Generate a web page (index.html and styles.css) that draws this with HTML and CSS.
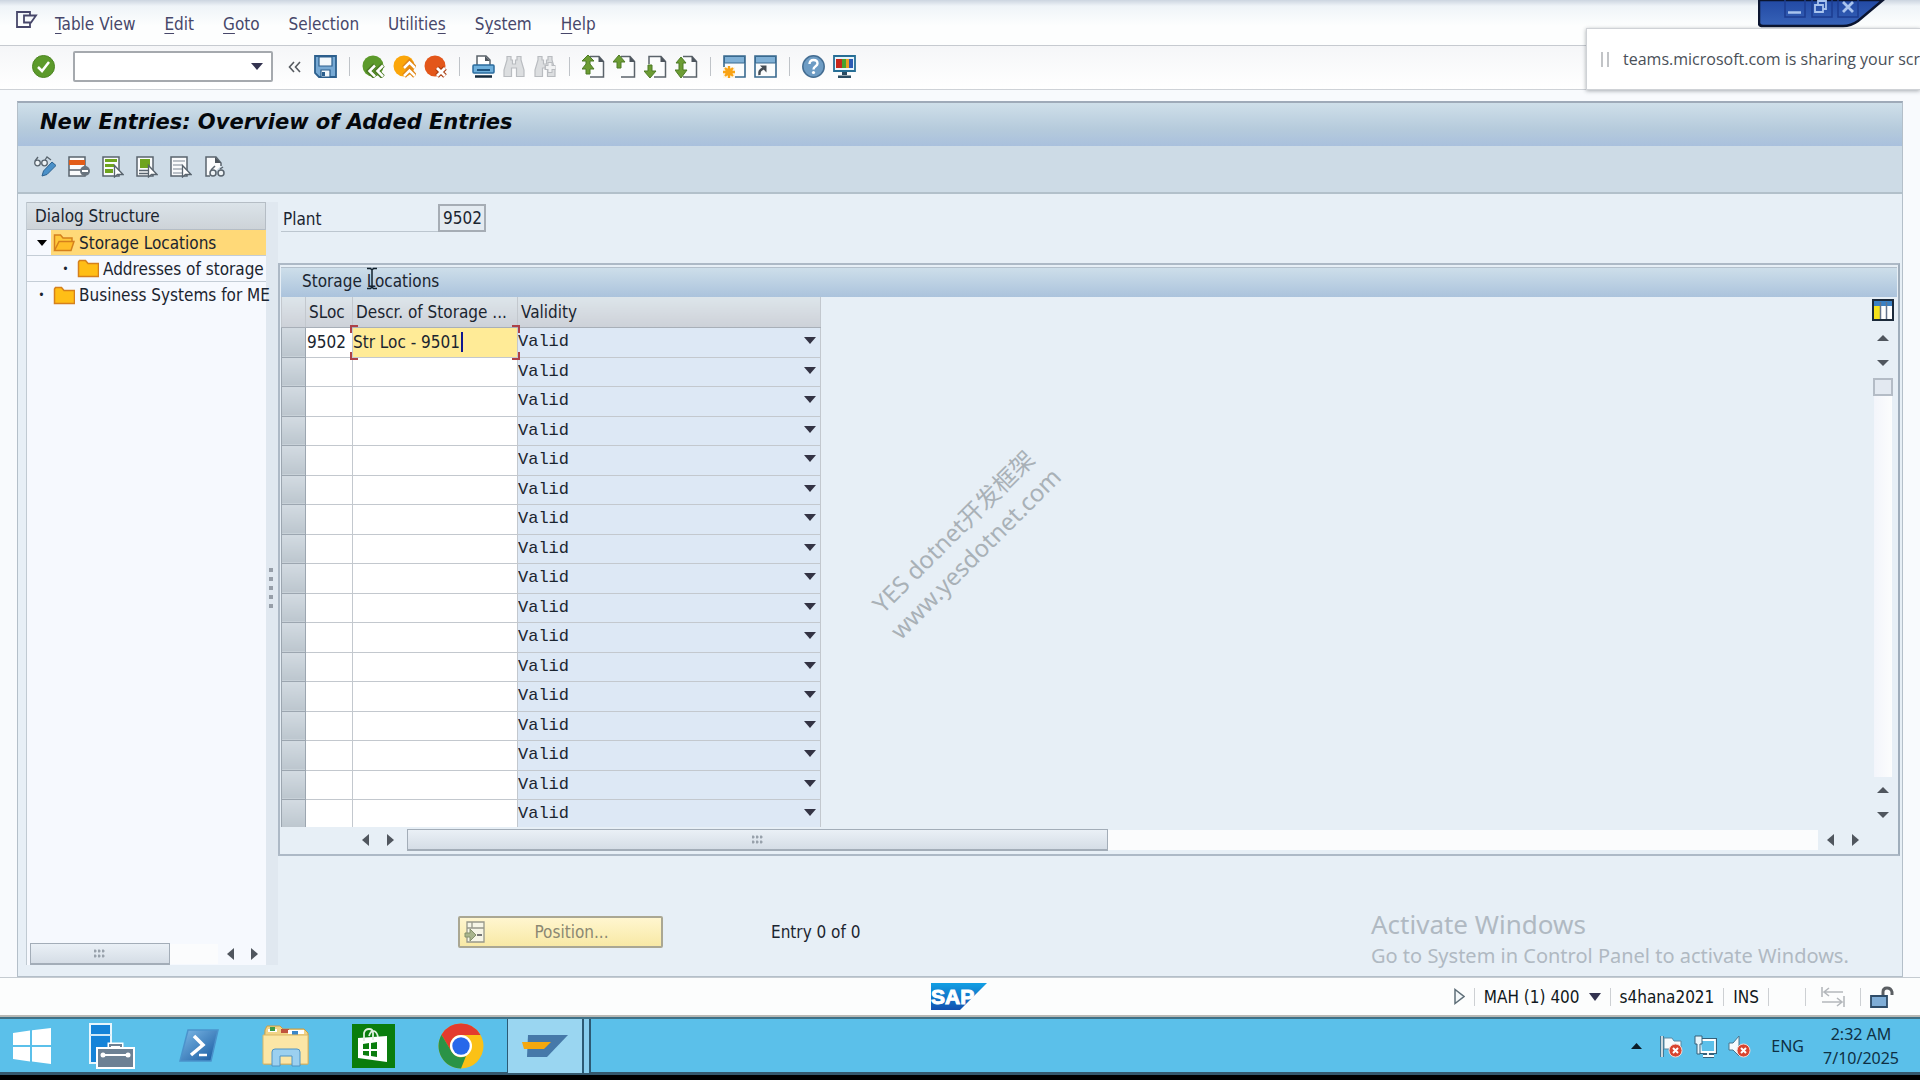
FILE: index.html
```html
<!DOCTYPE html>
<html lang="en">
<head>
<meta charset="utf-8">
<title>New Entries: Overview of Added Entries</title>
<link rel="stylesheet" href="styles.css">
</head>
<body>
<svg width="0" height="0" class="defs" aria-hidden="true">
  <defs>
    <linearGradient id="sapg" x1="0" y1="0" x2="0" y2="1"><stop offset="0" stop-color="#12a0e4"/><stop offset="1" stop-color="#1250b0"/></linearGradient>
    <linearGradient id="psg" x1="0" y1="0" x2="1" y2="1"><stop offset="0" stop-color="#7fbbe8"/><stop offset="1" stop-color="#15589f"/></linearGradient>
    <linearGradient id="rdg" x1="0" y1="0" x2="0" y2="1"><stop offset="0" stop-color="#2249a4"/><stop offset="1" stop-color="#3763b8"/></linearGradient>
    <g id="page"><path d="M8 1.500h9l4.500 5v15.500H8" fill="#fbfcfd" stroke="#5b636b" stroke-width="1.500"/><path d="M16.500 1v6h5.500z" fill="#4d555d"/></g>
    <g id="cursor"><path d="M12.500 9.500v11.500l3-2.500 1 0h4.500z" fill="#fff" stroke="#59646e" stroke-width="1.300"/></g>
    <g id="bino"><path d="M4 1.500h4v3.500h1.500v4h3v-4H14V1.500h4V5l3 10v6.500h-7.500V13h-5v8.500H1V15L4 5z" fill="#dcdee0" stroke="#b9bcc0" stroke-width="1.200"/></g>
    <g id="redx"><circle cx="15.500" cy="15.500" r="6.500" fill="#d8442f" stroke="#f3d8d4"/><path d="M13 13l5 5M18 13l-5 5" stroke="#fff" stroke-width="2"/></g>
    <g id="folder"><path d="M1.500 17.500V3l1-1.500h6L11 4.500h10.500v13z" fill="#ffbe16" stroke="#d5801c" stroke-width="1.500"/></g>
  </defs>
</svg>

<div class="app">
  <nav class="menubar">
    <svg class="sysicon" width="22" height="17" viewBox="0 0 22 17"><path d="M14 12v4H1V1h13v3M20 4.500H8v7h7z" fill="none" stroke="#47476a" stroke-width="1.800"/></svg>
    <a href="#"><u>T</u>able View</a><a href="#"><u>E</u>dit</a><a href="#"><u>G</u>oto</a><a href="#">Se<u>l</u>ection</a><a href="#">Utilitie<u>s</u></a><a href="#">S<u>y</u>stem</a><a href="#"><u>H</u>elp</a>
  </nav>

  <div class="toolbar">
    <button class="ic" aria-label="Enter"><svg viewBox="0 0 23 23"><circle cx="11.500" cy="11.500" r="11" fill="#5c9a2b" stroke="#4c8522"/><path d="M6 12l4 4 7-9" fill="none" stroke="#fff" stroke-width="2.500"/></svg></button>
    <div class="command"><input type="text" aria-label="Command field"><button aria-label="Command history"><svg width="12" height="7" viewBox="0 0 12 7"><path d="M0 0h12L6 7z" fill="#333350"/></svg></button></div>
    <button class="chev" aria-label="Collapse"><svg width="13" height="12" viewBox="0 0 13 12"><path d="M6 1L1.500 6 6 11M12 1L7.500 6l4.500 5" fill="none" stroke="#565a60" stroke-width="1.600"/></svg></button>
    <button class="ic" aria-label="Save"><svg viewBox="0 0 23 23"><path d="M1 1h21v21H5l-4-4z" fill="#77a9d4" stroke="#2c5f8d" stroke-width="1.800"/><path d="M5 2h13v9H5zM7 15h9v7H7z" fill="#f3f8fc" stroke="#2c5f8d" stroke-width="1.200"/><path d="M8 17h3v4H8z" fill="#2c5f8d"/></svg></button>
    <i class="sep"></i>
    <button class="ic" aria-label="Back"><svg viewBox="0 0 23 23"><circle cx="11" cy="11" r="10.500" fill="#5c9a2b"/><path d="M13 10l-6 6 6 6M21 10l-6 6 6 6" fill="none" stroke="#4c7a25" stroke-width="5"/><path d="M13 10.500L7.500 16l5.500 5.500M21 10.500L15.500 16l5.500 5.500" fill="none" stroke="#fff" stroke-width="2.500"/></svg></button>
    <button class="ic" aria-label="Exit"><svg viewBox="0 0 23 23"><circle cx="11" cy="11" r="10.500" fill="#fba60a"/><path d="M11 13l5.500-6 5.500 6M11 21l5.500-6 5.500 6" fill="none" stroke="#e08514" stroke-width="5"/><path d="M11 13l5.500-5.500L22 13M11 21l5.500-5.500L22 21" fill="none" stroke="#fff" stroke-width="2.500"/></svg></button>
    <button class="ic" aria-label="Cancel"><svg viewBox="0 0 23 23"><circle cx="11" cy="11" r="10.500" fill="#e3561a"/><path d="M13 13l8 8M21 13l-8 8" stroke="#a93a0c" stroke-width="5"/><path d="M13 13l8 8M21 13l-8 8" stroke="#fff" stroke-width="2.800"/></svg></button>
    <i class="sep"></i>
    <button class="ic" aria-label="Print"><svg viewBox="0 0 23 23"><path d="M5 11V1h9l4 4v6" fill="#fff" stroke="#5b636b" stroke-width="1.500"/><path d="M13 1v5h5z" fill="#4d555d"/><rect x="1" y="10" width="21" height="8" rx="1" fill="#6fb0dc" stroke="#2b6b9d" stroke-width="1.500"/><path d="M5 15h13" stroke="#1e5582" stroke-width="2"/><path d="M3 21.500h17" stroke="#152a3c" stroke-width="2.500"/></svg></button>
    <button class="ic" aria-label="Find"><svg viewBox="0 0 23 23"><use href="#bino"/></svg></button>
    <button class="ic" aria-label="Find next"><svg viewBox="0 0 23 23"><use href="#bino"/><path d="M16 7v11M10.500 12.500h11" stroke="#b9bcc0" stroke-width="5"/><path d="M16 8v9M12 12.500h9" stroke="#f1f2f3" stroke-width="3"/></svg></button>
    <i class="sep"></i>
    <button class="ic" aria-label="First page"><svg viewBox="0 0 23 23"><use href="#page"/><path d="M6 0l6 6H8v3l4 5H8v5H4v-5H0l4-5V6H0z" fill="#6c9c33" stroke="#4d7a26"/></svg></button>
    <button class="ic" aria-label="Previous page"><svg viewBox="0 0 23 23"><use href="#page"/><path d="M6 0l6 7H8v6H4V7H0z" fill="#6c9c33" stroke="#4d7a26"/></svg></button>
    <button class="ic" aria-label="Next page"><svg viewBox="0 0 23 23"><path d="M5 9V1.500h12l4.500 5v15.500H10" fill="#fbfcfd" stroke="#5b636b" stroke-width="1.500"/><path d="M16.500 1v6h5.500z" fill="#4d555d"/><path d="M6 23l6-7H8v-6H4v6H0z" fill="#6c9c33" stroke="#4d7a26"/></svg></button>
    <button class="ic" aria-label="Last page"><svg viewBox="0 0 23 23"><use href="#page"/><path d="M6 2l5 6H8v7h4l-6 8-6-8h4V8H1z" fill="#6c9c33" stroke="#4d7a26"/></svg></button>
    <i class="sep"></i>
    <button class="ic" aria-label="New session"><svg viewBox="0 0 23 23"><path d="M1 1h21v21H1z" fill="#fafcfd" stroke="#39698f" stroke-width="1.600"/><path d="M1.500 1.500h20V8h-20z" fill="#7fb0d6" stroke="#39698f"/><path d="M0 12h12v11H0z" fill="#fdf5e4"/><path d="M6 11v12M0 17h12M2 13l8 8M10 13l-8 8" stroke="#f9a314" stroke-width="2.300"/><circle cx="6" cy="17" r="3.800" fill="#f9a314"/></svg></button>
    <button class="ic" aria-label="Create shortcut"><svg viewBox="0 0 23 23"><path d="M1 1h21v21H1z" fill="#fafcfd" stroke="#39698f" stroke-width="1.600"/><path d="M1.500 1.500h20V8h-20z" fill="#7fb0d6" stroke="#39698f"/><path d="M5.500 20q-1-5 4-6.500" fill="none" stroke="#444c54" stroke-width="2.500"/><path d="M6 10.500h6.500v7z" fill="#444c54"/></svg></button>
    <i class="sep"></i>
    <button class="ic" aria-label="Help"><svg viewBox="0 0 23 23"><circle cx="11.500" cy="11.500" r="10.700" fill="#6e9cc4" stroke="#446d92" stroke-width="1.500"/><path d="M7.500 9q0-4 4-4t4 3.500c0 3-4 2.500-4 6" fill="none" stroke="#fff" stroke-width="2.400"/><circle cx="11.500" cy="17.500" r="1.600" fill="#fff"/></svg></button>
    <button class="ic" aria-label="Customize layout"><svg viewBox="0 0 23 23"><path d="M1 1h21v15H1z" fill="#e8f6fc" stroke="#266e96" stroke-width="1.800"/><path d="M3 4h6v9H3z" fill="#c6261c"/><path d="M9 4h4v9H9z" fill="#47a12d"/><path d="M13 4h3v9h-3z" fill="#e8a020"/><path d="M16 4h4v9h-4z" fill="#2d5bb4"/><path d="M9 17h5v3H9zM5 20.500h13V23H5z" fill="#2b4c63"/></svg></button>
  </div>

  <main class="frame">
    <h1>New Entries: Overview of Added Entries</h1>
    <div class="subbar">
      <button aria-label="Display/Change"><svg viewBox="0 0 22 22"><circle cx="3.500" cy="7" r="2.800" fill="#eef3f6" stroke="#59646e" stroke-width="1.300"/><circle cx="10.500" cy="7" r="2.800" fill="#eef3f6" stroke="#59646e" stroke-width="1.300"/><path d="M1 5l3-4M11 4l2-3 4 3" fill="none" stroke="#59646e" stroke-width="1.300"/><path d="M8 20l1.500-5L18 6l4 3.500-9 9z" fill="#4a90c8" stroke="#2c618f"/></svg></button>
      <button aria-label="Delete"><svg viewBox="0 0 22 22"><path d="M1 1h16v19H1zM1 14h16" fill="#fafbfc" stroke="#59646e" stroke-width="1.500"/><path d="M1 4h16v5H1z" fill="#e25c18"/><circle cx="17" cy="15" r="5" fill="#69747e"/><path d="M14 15h6" stroke="#fff" stroke-width="2"/></svg></button>
      <button aria-label="Select all"><svg viewBox="0 0 22 22"><path d="M1 1h16v19H1z" fill="#fafbfc" stroke="#59646e" stroke-width="1.500"/><path d="M3 3h12v3H3zM3 8h9v3H3zM3 13h8v4H3z" fill="#6fa41e"/><use href="#cursor"/></svg></button>
      <button aria-label="Select block"><svg viewBox="0 0 22 22"><path d="M1 1h16v19H1zM3 14.500h9M3 17.500h9" fill="#fafbfc" stroke="#59646e" stroke-width="1.500"/><path d="M4 3h10v9H4z" fill="#6fa41e"/><use href="#cursor"/></svg></button>
      <button aria-label="Deselect all"><svg viewBox="0 0 22 22"><path d="M1 1h16v19H1z" fill="#fafbfc" stroke="#59646e" stroke-width="1.500"/><path d="M3 5h12M3 9h9M3 13h9M3 17h9" stroke="#a6afb6" stroke-width="1.500"/><use href="#cursor"/></svg></button>
      <button aria-label="Print preview"><svg viewBox="0 0 22 22"><path d="M6 20H2V1h10l5 6v3" fill="#fafbfc" stroke="#59646e" stroke-width="1.500"/><path d="M11 1v6h6z" fill="#4d555d"/><circle cx="9" cy="17" r="3" fill="#eef3f6" stroke="#59646e" stroke-width="1.500"/><circle cx="17" cy="17" r="3" fill="#eef3f6" stroke="#59646e" stroke-width="1.500"/><path d="M7 14l4-4M16 13l3-2" fill="none" stroke="#59646e" stroke-width="1.500"/></svg></button>
    </div>

    <div class="body">
      <aside class="tree">
        <h2>Dialog Structure</h2>
        <ul>
          <li><span class="tw"><svg width="10" height="6" viewBox="0 0 10 6"><path d="M0 0h10L5 6z"/></svg></span><a class="sel" href="#"><svg width="22" height="19" viewBox="0 0 22 19"><path d="M1.500 17V2h6L10 5h9v3" fill="#ffc83a" stroke="#d5801c" stroke-width="1.500"/><path d="M1.500 17.500L6 8.500h15l-3 9z" fill="#ffbe28" stroke="#d5801c" stroke-width="1.500"/></svg>Storage Locations</a></li>
          <li class="child"><span class="tw">•</span><a href="#"><svg width="22" height="19" viewBox="0 0 22 19"><use href="#folder"/></svg>Addresses of storage</a></li>
          <li class="last"><span class="tw">•</span><a href="#"><svg width="22" height="19" viewBox="0 0 22 19"><use href="#folder"/></svg>Business Systems for ME</a></li>
        </ul>
        <div class="hbar">
          <div class="thumb short"><i class="grip"></i></div><div class="track"></div>
          <button class="arr l" aria-label="Scroll left"></button><button class="arr r" aria-label="Scroll right"></button>
        </div>
      </aside>

      <div class="splitter"><i></i><i></i><i></i><i></i><i></i></div>

      <section class="content">
        <div class="plant"><label for="plant">Plant</label><input id="plant" value="9502" readonly></div>

        <section class="group">
          <h3>Storage Locations</h3>
          <div class="gridwrap">
            <table>
              <colgroup><col class="c0"><col class="c1"><col class="c2"><col class="c3"></colgroup>
              <thead><tr><th></th><th>SLoc</th><th>Descr. of Storage ...</th><th>Validity</th></tr></thead>
              <tbody>
                <tr><th></th><td><input aria-label="SLoc" value="9502"></td><td class="active"><span class="corners"></span><span class="typed"><span role="textbox" aria-label="Description">Str Loc - 9501</span><i class="caret"></i></span></td><td class="v"><select aria-label="Validity"><option>Valid</option></select></td></tr>
                <tr><th></th><td><input aria-label="SLoc"></td><td><input aria-label="Description"></td><td class="v"><select aria-label="Validity"><option>Valid</option></select></td></tr>
                <tr><th></th><td><input aria-label="SLoc"></td><td><input aria-label="Description"></td><td class="v"><select aria-label="Validity"><option>Valid</option></select></td></tr>
                <tr><th></th><td><input aria-label="SLoc"></td><td><input aria-label="Description"></td><td class="v"><select aria-label="Validity"><option>Valid</option></select></td></tr>
                <tr><th></th><td><input aria-label="SLoc"></td><td><input aria-label="Description"></td><td class="v"><select aria-label="Validity"><option>Valid</option></select></td></tr>
                <tr><th></th><td><input aria-label="SLoc"></td><td><input aria-label="Description"></td><td class="v"><select aria-label="Validity"><option>Valid</option></select></td></tr>
                <tr><th></th><td><input aria-label="SLoc"></td><td><input aria-label="Description"></td><td class="v"><select aria-label="Validity"><option>Valid</option></select></td></tr>
                <tr><th></th><td><input aria-label="SLoc"></td><td><input aria-label="Description"></td><td class="v"><select aria-label="Validity"><option>Valid</option></select></td></tr>
                <tr><th></th><td><input aria-label="SLoc"></td><td><input aria-label="Description"></td><td class="v"><select aria-label="Validity"><option>Valid</option></select></td></tr>
                <tr><th></th><td><input aria-label="SLoc"></td><td><input aria-label="Description"></td><td class="v"><select aria-label="Validity"><option>Valid</option></select></td></tr>
                <tr><th></th><td><input aria-label="SLoc"></td><td><input aria-label="Description"></td><td class="v"><select aria-label="Validity"><option>Valid</option></select></td></tr>
                <tr><th></th><td><input aria-label="SLoc"></td><td><input aria-label="Description"></td><td class="v"><select aria-label="Validity"><option>Valid</option></select></td></tr>
                <tr><th></th><td><input aria-label="SLoc"></td><td><input aria-label="Description"></td><td class="v"><select aria-label="Validity"><option>Valid</option></select></td></tr>
                <tr><th></th><td><input aria-label="SLoc"></td><td><input aria-label="Description"></td><td class="v"><select aria-label="Validity"><option>Valid</option></select></td></tr>
                <tr><th></th><td><input aria-label="SLoc"></td><td><input aria-label="Description"></td><td class="v"><select aria-label="Validity"><option>Valid</option></select></td></tr>
                <tr><th></th><td><input aria-label="SLoc"></td><td><input aria-label="Description"></td><td class="v"><select aria-label="Validity"><option>Valid</option></select></td></tr>
                <tr><th></th><td><input aria-label="SLoc"></td><td><input aria-label="Description"></td><td class="v"><select aria-label="Validity"><option>Valid</option></select></td></tr>
              </tbody>
            </table>
            <div class="vbar">
              <button class="config" aria-label="Table settings"><svg width="22" height="22" viewBox="0 0 22 22"><path d="M1 1h20v20H1z" fill="#fff" stroke="#1c2a3a" stroke-width="2"/><path d="M2 2h18v5H2z" fill="#3a80c4"/><path d="M2 7h6v13H2z" fill="#f6e21c"/><path d="M8.500 3v17M14.500 3v17" stroke="#64748c" stroke-width="1.500"/></svg></button>
              <button class="arr u" aria-label="Scroll up"></button><button class="arr d" aria-label="Scroll down"></button>
              <div class="vthumb"></div><div class="vtrack"></div>
              <button class="arr u" aria-label="Page up"></button><button class="arr d" aria-label="Page down"></button>
            </div>
          </div>
          <div class="hbar wide">
            <button class="arr l" aria-label="Scroll left"></button><button class="arr r" aria-label="Scroll right"></button>
            <div class="thumb long"><i class="grip"></i></div><div class="track"></div>
            <button class="arr l" aria-label="Scroll left"></button><button class="arr r" aria-label="Scroll right"></button>
          </div>
        </section>

        <div class="foot">
          <button class="position"><svg width="22" height="22" viewBox="0 0 22 22"><path d="M3 1h17v20H3zM3 7h17M8 1v6" fill="#f6f5e6" stroke="#96978a" stroke-width="1.300"/><path d="M1 12h5V8l6 6-6 6v-4H1z" fill="#a9b58c" stroke="#84906c"/><path d="M13 14h5" stroke="#777" stroke-width="2"/></svg><span>Position...</span></button>
          <span>Entry 0 of 0</span>
        </div>
      </section>
    </div>
  </main>

  <footer class="status">
    <svg class="sap" width="56" height="27" viewBox="0 0 56 27"><path d="M0 0h56L29 27H0z" fill="url(#sapg)"/><text x="0" y="21" class="saptext">SAP</text></svg>
    <div class="info">
      <svg class="tri" width="11" height="18" viewBox="0 0 11 18"><path d="M1 1.500v14l9-7z" fill="#f4f8fa" stroke="#5f6f79" stroke-width="1.500"/></svg>
      <i></i><span class="cell">MAH (1) 400 <svg width="12" height="8" viewBox="0 0 12 8"><path d="M0 0h12L6 8z" fill="#333350"/></svg></span>
      <i></i><span class="cell">s4hana2021</span><i></i><span class="cell">INS</span><i></i><span class="blank"></span><i></i>
      <svg class="swap" width="24" height="22" viewBox="0 0 24 22"><path d="M1 1v10M23 10v11M3 6h19M8 2L3 6l5 4M1 16h20M16 12l5 4-5 4" fill="none" stroke="#b4b8bc" stroke-width="1.600"/></svg>
      <i></i>
      <svg class="lock" width="24" height="22" viewBox="0 0 24 22"><path d="M13 10V6q0-4 4-4t5 4v3" fill="none" stroke="#5a5e62" stroke-width="3"/><path d="M1 10h16v11H1z" fill="#7fadd6" stroke="#2e4c68" stroke-width="1.800"/></svg>
    </div>
  </footer>
</div>

<div class="taskbar">
  <div class="tasks">
    <button class="t1" aria-label="Start"><svg width="38" height="36" viewBox="0 0 38 36"><path d="M0 5l17-2.500V17H0zM19 2.200L38 0v17H19zM0 19h17v14.500L0 31zM19 19h19v17l-19-2.500z" fill="#fff"/></svg></button>
    <button class="t2" aria-label="Server Manager"><svg width="46" height="46" viewBox="0 0 46 46"><path d="M1 1h21v39H1z" fill="#1583d8" stroke="#e8f6fd" stroke-width="2"/><path d="M1 12h21" stroke="#d0e9f8" stroke-width="2"/><path d="M21 25v-3h11v3" fill="none" stroke="#fff" stroke-width="5"/><path d="M8 25h37v20H8z" fill="#6d8194" stroke="#fff" stroke-width="2"/><path d="M21 24v-2h11v2" fill="none" stroke="#6d8194" stroke-width="2"/><path d="M12 32h29" stroke="#fff" stroke-width="2"/><circle cx="14" cy="32" r="2.500" fill="#fff"/><circle cx="39" cy="32" r="2.500" fill="#fff"/></svg></button>
    <button class="t3" aria-label="PowerShell"><svg width="40" height="34" viewBox="0 0 40 34"><path d="M9 1h30l-7 31H1z" fill="url(#psg)" stroke="#4b93cc" stroke-width="1.500"/><path d="M15 7l9 9-12 10" fill="none" stroke="#fff" stroke-width="3.500"/><path d="M20 26h8" stroke="#fff" stroke-width="2.500"/></svg></button>
    <button class="t4" aria-label="File Explorer"><svg width="48" height="42" viewBox="0 0 48 42"><path d="M3 5l2-4h13l3 3h21l4 4v31H2z" fill="#f2d486" stroke="#c99d47"/><path d="M6 4h9v3H6z" fill="#fff"/><path d="M8 2h5v4H8z" fill="#3a9a48"/><path d="M19 4h8v4h-8z" fill="#c0523c"/><path d="M26 5h16v4H26z" fill="#fff"/><path d="M30 6h6v4h-6z" fill="#3a86c8"/><path d="M1 10h45v29H1z" fill="#fbe6a6" stroke="#dcb765"/><path d="M10 41V27q0-3 3-3h22q3 0 3 3v14h-8V31H18v10z" fill="#9bd0f0" stroke="#4f94c4"/></svg></button>
    <button class="t5" aria-label="Store"><svg width="43" height="44" viewBox="0 0 43 44"><path d="M0 0h43v44H0z" fill="#0a7d0d"/><path d="M6 14l29-2v26L6 34z" fill="#fff"/><path d="M12 17V9q1-4 5-4t4 4v7M17 12q2-6 5-5t4 6" fill="none" stroke="#dff0df" stroke-width="1.800"/><path d="M11 20l6-1v6h-6zM19 19l6-1v7h-6zM11 27h6v5l-6-1zM19 27h6v6l-6-1z" fill="#0a7d0d"/></svg></button>
    <button class="t6" aria-label="Chrome"><svg width="46" height="46" viewBox="0 0 46 46"><circle cx="23" cy="23" r="22.500" fill="#fbc116"/><path d="M3.500 11.800A22.500 22.500 0 0 1 42.500 12H23a11 11 0 0 0-10 16z" fill="#e33b2e"/><path d="M3.500 11.800L13.500 28.500a11 11 0 0 0 14.500 4.500L23 45.500A22.500 22.500 0 0 1 3.500 11.800z" fill="#2a9347"/><circle cx="23" cy="23" r="11" fill="#fff"/><circle cx="23" cy="23" r="8.700" fill="#2768ea"/></svg></button>
    <button class="t7" aria-label="SAP Logon"><svg width="46" height="22" viewBox="0 0 46 22"><path d="M6 0h40L25 22H5z" fill="#4679a9"/><path d="M0 7h29l-7 7H2z" fill="#f5a80f"/></svg></button>
    <span class="stack"></span>
  </div>
  <div class="tray">
    <svg class="up" width="11" height="6" viewBox="0 0 11 6"><path d="M0 6h11L5.500 0z" fill="#0a1c28"/></svg>
    <svg width="23" height="23" viewBox="0 0 23 23"><path d="M2 1v21" stroke="#35607a" stroke-width="3.500"/><path d="M2 1v21" stroke="#fff" stroke-width="1.500"/><path d="M4 3h8l2 3h7v8H4z" fill="#f6fbfd" stroke="#5a89a2"/><use href="#redx"/></svg>
    <svg width="23" height="23" viewBox="0 0 23 23"><path d="M6 5h15v12H7zM14 17v4M9 21h11" fill="none" stroke="#35607a" stroke-width="4"/><path d="M6 5h15v12H7zM14 17v4M9 21h11" fill="#5cc0ea" stroke="#fff" stroke-width="1.800"/><path d="M1 1h7v8H6v10H3V9H1z" fill="#e8f5fb" stroke="#35607a"/></svg>
    <svg width="23" height="23" viewBox="0 0 23 23"><path d="M1 8h4l6-7v20l-6-6H1z" fill="#f6fbfd" stroke="#48748c"/><use href="#redx"/></svg>
    <span class="lang">ENG</span>
    <div class="clock"><div>2:32 AM</div><div>7/10/2025</div></div>
  </div>
</div>

<div class="watermark"><div>YES dotnet开发框架</div><div>www.yesdotnet.com</div></div>
<div class="activate"><div>Activate Windows</div><p>Go to System in Control Panel to activate Windows.</p></div>
<svg class="ibeam" width="12" height="23" viewBox="0 0 12 23"><path d="M1 1.500h3.500L6 3l1.500-1.500H11M6 3v17M1 21.500h3.500L6 20l1.500 1.500H11" fill="none" stroke="#10202c" stroke-width="1.500"/></svg>
<svg class="rdp" width="136" height="28" viewBox="0 0 136 28"><path d="M1 0v23q0 3 4 3h80q8 0 15-5L125 0z" fill="url(#rdg)" stroke="#0b1530" stroke-width="2.500"/><path d="M27-1h20v18H27zM54-1h20v18H54zM80-1h20v18H80z" fill="none" stroke="#1d3c90" stroke-width="1.500"/><path d="M30 12.500h13" stroke="#a9c4ee" stroke-width="2.500"/><path d="M57 5h8v7h-8zM60 4V1h8v8h-3" fill="none" stroke="#a9c4ee" stroke-width="1.800"/><path d="M85 2l10 10M95 2L85 12" stroke="#a9c4ee" stroke-width="2.800"/></svg>
<div class="sharing"><i></i><i></i><span>teams.microsoft.com is sharing your screen.</span></div>
</body>
</html>
```
FILE: styles.css
```css
* { box-sizing: border-box; }
html, body { height: 100%; margin: 0; }
body {
  display: flex;
  flex-direction: column;
  overflow: hidden;
  position: relative;
  background: #000;
  color: #1b2530;
  font: 17px/24px "DejaVu Sans Condensed", "Noto Sans", "Noto Sans CJK SC", sans-serif;
}
.defs { position: absolute; }
svg { display: block; flex: none; }
h1, h2, h3, ul, p { margin: 0; padding: 0; font-weight: normal; }
a { color: inherit; text-decoration: none; }
button { border: 0; padding: 0; background: none; font: inherit; color: inherit; }
input, select { font: inherit; color: inherit; border: 0; padding: 0; margin: 0; background: none; border-radius: 0; outline: 0; min-width: 0; }

.app { flex: 1; min-height: 0; display: flex; flex-direction: column; background: #f8fafd; }

.menubar {
  height: 46px;
  display: flex;
  align-items: center;
  gap: 29px;
  padding: 3px 16px 0;
  background: linear-gradient(#ccd5e0, #eff4f8 6px, #fdfefe 26px);
  border-bottom: 1px solid #c6cad0;
  color: #47476a;
}
.menubar a { white-space: nowrap; }
.menubar u { text-underline-offset: 3px; }
.sysicon { margin: 0 -12px 9px 0; }

.toolbar {
  height: 44px;
  display: flex;
  align-items: center;
  gap: 8px;
  padding: 0 32px 2px;
  background: linear-gradient(#f5f6f8, #fff);
  border-bottom: 1px solid #ced2d7;
}
.ic, .ic svg { width: 23px; height: 23px; }
.command {
  width: 200px; height: 31px; margin-left: 10px;
  display: flex; align-items: center; padding-right: 8px;
  background: #fff; border: 2px solid #a5a9ae; border-radius: 2px;
}
.command input { flex: 1; }
.chev { margin: 0 5px 0 7px; }
.sep { width: 1px; height: 19px; margin: 0 4px; background: #bfc3c8; }

.frame {
  flex: 1; min-height: 0;
  margin: 11px 17px 0;
  display: flex; flex-direction: column;
  border: 1px solid #b4bfc9;
  border-top: 2px solid #9faab8;
  background: #e7eff6;
}
.frame h1 {
  height: 43px;
  padding: 0 22px;
  background: linear-gradient(#cfdfe9, #b6cbdc 60%, #a9c0dd);
  font: italic bold 21px/38px "DejaVu Sans", sans-serif;
  color: #05080c;
}
.subbar {
  height: 48px;
  display: flex; align-items: center; gap: 12px;
  padding: 0 16px 4px;
  background: #cddbe6;
  border-bottom: 2px solid #b2c0ca;
}
.subbar svg { width: 22px; height: 22px; }

.body { flex: 1; min-height: 0; display: grid; grid-template-columns: 240px 12px minmax(0, 1fr); padding: 8px 2px 0 8px; }

.tree { z-index: 1; min-height: 0; margin-bottom: 11px; display: flex; flex-direction: column; background: #f6f9fe; border-left: 1px solid #c0cad2; }
.tree h2 { height: 28px; padding-left: 8px; font-size: 17px; line-height: 27px; background: linear-gradient(#dbe3e9, #cdd3d8); border: 1px solid #b5bdc5; border-left: 0; }
.tree ul { flex: 1; list-style: none; }
.tree li { height: 26px; display: flex; align-items: center; border-bottom: 1px solid #c4cdd6; }
.tree li.last { border-bottom: 0; }
.tw { width: 24px; padding-left: 5px; flex: none; display: flex; justify-content: center; font-size: 12px; }
.child { padding-left: 24px; }
.tree a { flex: 1; min-width: 0; height: 25px; display: flex; align-items: center; gap: 4px; padding-left: 2px; white-space: nowrap; }
.tree a.sel { background: #ffd978; }

.hbar { height: 22px; display: flex; align-items: center; }
.thumb { height: 22px; display: grid; place-items: center; border: 1px solid #a3adb8; border-bottom-width: 2px; background: linear-gradient(#eaf0f6, #d5dde6); }
.thumb.short { width: 140px; margin-left: 3px; }
.thumb.long { width: 701px; margin-left: 4px; }
.grip { width: 12px; height: 10px; background: radial-gradient(circle at 1px 2px, #98a1ab 1px, transparent 2px) 0 0 / 4px 5px; }
.track { flex: 1; height: 20px; background: #fbfcfd; }
.arr { width: 25px; height: 22px; display: grid; place-items: center; flex: none; }
.arr::before { content: ""; border: 6px solid transparent; }
.arr.l::before { border-left: 0; border-right: 7px solid #50565e; }
.arr.r::before { border-right: 0; border-left: 7px solid #50565e; }
.arr.u::before { border-top: 0; border-bottom: 6px solid #50565e; }
.arr.d::before { border-bottom: 0; border-top: 6px solid #50565e; }
.tree .arr { width: 24px; }

.splitter { display: flex; flex-direction: column; align-items: center; justify-content: center; gap: 5px; background: #e0e8f0; padding: 8px 2px 0 0; margin-bottom: 11px; }
.splitter i { width: 4px; height: 4px; background: #969ea8; }

.content { min-width: 0; min-height: 0; display: flex; flex-direction: column; }
.plant { display: flex; height: 28px; margin: 2px 0 31px 3px; }
.plant label { width: 157px; padding: 0 2px; line-height: 30px; border-bottom: 1px solid #bcc6cf; }
.plant input { width: 48px; height: 28px; padding-left: 3px; border: 2px solid #a6adb5; background: #e4ebf1; }

.group { flex: 1; min-height: 0; display: flex; flex-direction: column; border: 2px solid #adb9c6; border-right-color: #9fadbb; padding: 2px 1px 3px; overflow: hidden; }
.group h3 { height: 30px; flex: none; padding-left: 21px; font-size: 17px; line-height: 26px; background: linear-gradient(#cddeea, #abc3dc); border-top: 1px solid #b3c0cc; }
.gridwrap { flex: 1; min-height: 0; display: flex; justify-content: space-between; overflow: hidden; }
table { border-collapse: collapse; table-layout: fixed; width: 539px; flex: none; align-self: flex-start; }
.c0 { width: 24px; } .c1 { width: 47px; } .c2 { width: 165px; } .c3 { width: 303px; }
thead tr { height: 30px; }
tbody tr { height: 29px; }
tbody tr:nth-child(odd) { height: 30px; }
th, td { padding: 0; height: inherit; border: 1px solid #c3c8ce; border-top: 0; text-align: left; font-weight: normal; white-space: nowrap; }
thead th { padding-left: 3px; background: linear-gradient(#dde5ea, #cdd1d8); border-bottom: 1px solid #a8afb8; }
tbody th { background: linear-gradient(#d3dbe2, #bcc6ce); border-color: #9ca6b0; }
td { background: #fff; }
td input { display: block; width: 100%; height: 28px; padding-left: 1px; }
td.v { background: #dde8f5; }
td select {
  display: block; width: 100%; height: 28px;
  appearance: none;
  font: 17px/28px "Liberation Mono", monospace;
  background: url("data:image/svg+xml,%3Csvg xmlns='http://www.w3.org/2000/svg' width='12' height='7'%3E%3Cpath d='M0 0h12L6 7z' fill='%23334'/%3E%3C/svg%3E") right 4px top 9px no-repeat;
}
td.active { position: relative; background: #ffeb97; }
.typed { display: flex; align-items: center; }
.caret { width: 2px; height: 20px; background: #101890; margin-left: 1px; }
.corners {
  position: absolute; inset: -3px; pointer-events: none; z-index: 2;
  --c: #ad4148;
  background:
    linear-gradient(var(--c) 0 0) 0 0 / 8px 2px, linear-gradient(var(--c) 0 0) 0 0 / 2px 8px,
    linear-gradient(var(--c) 0 0) 100% 0 / 8px 2px, linear-gradient(var(--c) 0 0) 100% 0 / 2px 8px,
    linear-gradient(var(--c) 0 0) 0 100% / 8px 2px, linear-gradient(var(--c) 0 0) 0 100% / 2px 8px,
    linear-gradient(var(--c) 0 0) 100% 100% / 8px 2px, linear-gradient(var(--c) 0 0) 100% 100% / 2px 8px;
  background-repeat: no-repeat;
}
.vbar { width: 28px; display: flex; flex-direction: column; align-items: center; }
.config { margin: 2px 0 4px; }
.vbar .arr { height: 25px; }
.vthumb { width: 20px; height: 18px; margin-top: 3px; border: 2px solid #b4bcc6; background: #e3e9f1; flex: none; }
.vtrack { flex: 1; width: 18px; background: linear-gradient(90deg, #f3f5fb, #fcfdfd); }
.wide { flex: none; margin-top: 2px; padding: 0 29px 0 72px; }

.foot { flex: none; height: 120px; display: flex; align-items: flex-start; gap: 108px; padding: 60px 0 0 180px; line-height: 32px; }
.position {
  width: 205px; height: 32px; display: flex; align-items: center; padding: 0 4px;
  border: 2px solid #aaa793; border-radius: 2px;
  background: linear-gradient(#fff6cf, #f8e9a5); color: #8b8873;
}
.position span { flex: 1; text-align: center; }

.status { height: 40px; flex: none; position: relative; display: flex; justify-content: flex-end; align-items: center; padding: 0 26px 0; background: #fcfdfd; border-top: 1px solid #c5cbd1; border-bottom: 2px solid #b9b9b5; color: #101820; }
.sap { position: absolute; left: 931px; top: 5px; }
.saptext { font: bold 21px "Liberation Sans", sans-serif; fill: #fff; stroke: #fff; stroke-width: 1px; }
.info { display: flex; align-items: center; gap: 9px; }
.info i { width: 1px; height: 18px; background: #cdd0d3; }
.info .cell { display: flex; align-items: center; gap: 9px; }
.info .blank { width: 18px; }
.info .swap { margin: 0 6px; }

.taskbar { height: 63px; flex: none; display: flex; justify-content: space-between; background: #5bc0ea; border-top: 2px solid #3f7187; border-bottom: 5px solid #000; box-shadow: inset 0 -3px #35596e; font-family: "Noto Sans", sans-serif; color: #0e3044; }
.tasks { display: flex; align-items: center; padding: 0 0 2px 13px; }
.t2 { margin-left: 38px; } .t3 { margin-left: 44px; } .t4 { margin-left: 43px; } .t5 { margin-left: 42px; } .t6 { margin-left: 43px; }
.t7 { width: 77px; height: 54px; margin-left: 23px; display: grid; place-items: center; background: #9ad6f1; border: 1px solid #2c5a74; border-width: 0 2px 0 1px; }
.stack { width: 7px; height: 54px; background: #87ceee; border-right: 2px solid #2c5a74; }
.tray { display: flex; align-items: center; gap: 11px; padding: 0 21px 2px 0; font-size: 16px; }
.tray .up { margin-right: 7px; }
.lang { margin-left: 9px; }
.clock { text-align: center; margin-left: 8px; line-height: 24px; }

.watermark { position: absolute; left: 964px; top: 542px; width: 260px; margin: -31px 0 0 -130px; transform: rotate(-45deg); color: #a9b1b7; font: 24px/31px "Noto Sans", "Noto Sans CJK SC", sans-serif; text-align: center; white-space: nowrap; pointer-events: none; }
.activate { position: absolute; right: 71px; bottom: 110px; width: 478px; color: #b0b9c2; font: 20px/28px "Noto Sans", sans-serif; white-space: nowrap; pointer-events: none; }
.activate div { font-size: 26px; line-height: 36px; }
.ibeam { position: absolute; left: 366px; top: 267px; }
.rdp { position: absolute; right: 26px; top: 0; }
.sharing {
  position: absolute; top: 28px; right: 0; width: 334px; height: 62px;
  display: flex; align-items: center; gap: 4px; padding-left: 14px; overflow: hidden;
  background: #fff; border: 1px solid #cfd2d6; border-right: 0; box-shadow: 0 1px 4px rgba(40, 50, 60, .4);
  color: #4a5058; font: 16px/24px "Open Sans", "Noto Sans", sans-serif; white-space: nowrap;
}
.sharing i { width: 2px; height: 15px; background: #c2c4c7; flex: none; }
.sharing span { margin-left: 10px; }
```
